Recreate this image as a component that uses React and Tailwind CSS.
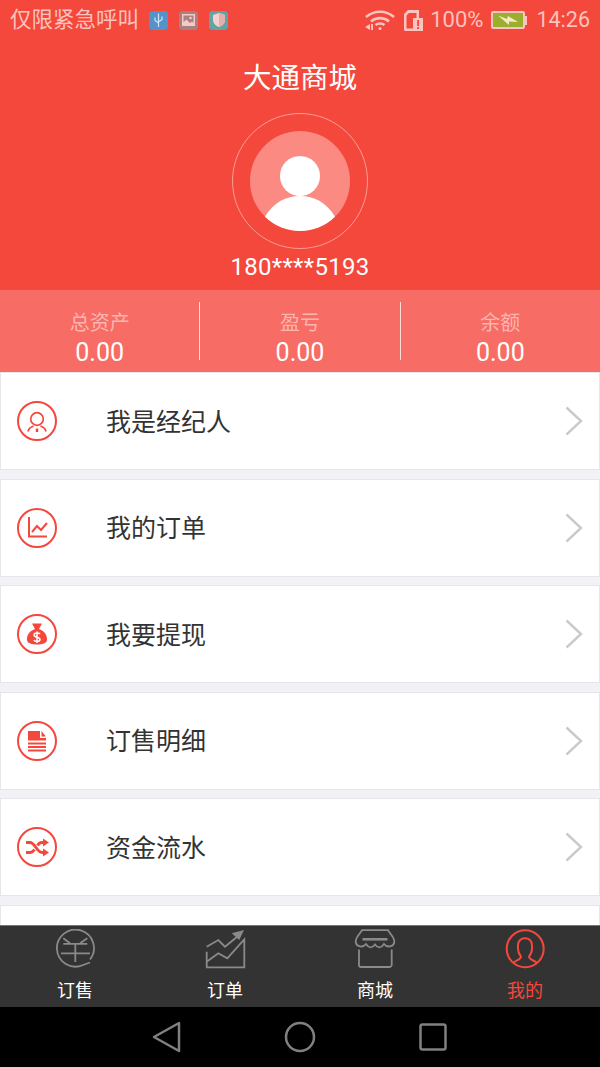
import React from 'react';

const CJK = "font-['Roboto','Noto_Sans_CJK_SC',sans-serif]";

const StatusBar = () => (
  <div className="h-10 flex items-center justify-between pl-[10px] pr-[10px] text-[#fdc3be]">
    <div className="flex items-center">
      <span className="text-[21.5px] leading-none">仅限紧急呼叫</span>
      <div className="flex gap-[11px] ml-[10px]">
        <div className="w-[19px] h-[19px] rounded-[4px] bg-[#5393c9] flex items-center justify-center">
          <svg width="11" height="15" viewBox="0 0 11 15" fill="none" stroke="#cfe3f2" strokeWidth="1.2">
            <path d="M5.5 0.5V14M2 4.5V7.5L5.500 10M9 3.500V6.500L5.500 9" />
          </svg>
        </div>
        <div className="w-[19px] h-[19px] rounded-[4px] bg-[#a97f82] flex items-center justify-center">
          <svg width="13" height="12" viewBox="0 0 13 12" fill="#f6c9c5">
            <path d="M0 0H13V12H0Z M1.500 1.500V8L4.500 5.500L8 9L10 7.500L11.500 9V1.500Z" fillRule="evenodd" />
            <circle cx="8.500" cy="4" r="1.300" />
          </svg>
        </div>
        <div className="w-[19px] h-[19px] rounded-[4px] bg-[#60a5a5] flex items-center justify-center">
          <svg width="12" height="14" viewBox="0 0 12 14">
            <path d="M6 0L12 2V7C12 10.500 9 13 6 14C3 13 0 10.500 0 7V2Z" fill="#f8cfcc" />
            <path d="M6 0L12 2V7C12 10.500 9 13 6 14Z" fill="#e3aeb0" />
          </svg>
        </div>
      </div>
    </div>
    <div className="flex items-center">
      <svg width="32" height="22" viewBox="0 0 32 22" fill="none" stroke="#fdc3be" strokeWidth="2.600">
        <path d="M2 8C10 1 22 1 30 8" />
        <path d="M7 12.500C12 8 20 8 25 12.500" />
        <path d="M11.500 16C14 14 18 14 20.500 16" />
        <circle cx="16" cy="19.500" r="1.500" fill="#fdc3be" stroke="none" />
        <path d="M1 18L6 15V21Z" fill="#fdc3be" stroke="none" />
        <path d="M8 15V21" strokeWidth="2" />
      </svg>
      <svg className="ml-[8px]" width="19" height="21" viewBox="0 0 19 21">
        <path d="M4 0H15V8H12.500V3H5L2.500 5.500V18.500H9V21H1.500A1.500 1.500 0 0 1 0 19.500V4Z" fill="#fdc3be" />
        <path d="M9 8H19V21H9Z" fill="#fdc3be" />
        <path d="M13.200 10H15V16H13.200ZM13.200 17H15V19H13.200Z" fill="#f4483d" />
      </svg>
      <span className="ml-[7px] text-[22px] leading-none">100%</span>
      <div className="ml-[8px] flex items-center">
        <div className="w-[34px] h-[18px] border-2 border-[#fdc3be] rounded-[2px] bg-[#9cae2e] flex items-center justify-center">
          <svg width="22" height="13" viewBox="0 0 22 13">
            <path d="M1 1.500L10 5L11 2L21 8L12 7.500L12 11Z" fill="#f6e9c8" />
          </svg>
        </div>
        <div className="w-[2px] h-[9px] bg-[#fdc3be]" />
      </div>
      <span className="ml-[9px] text-[21.5px] leading-none">14:26</span>
    </div>
  </div>
);

const Header = () => (
  <div className="bg-[#f4483d] h-[290px] flex flex-col">
    <StatusBar />
    <div className="text-center text-white text-[28.5px] leading-none mt-[25px]">大通商城</div>
    <div className="mx-auto mt-[19.5px] w-[136px] h-[136px] rounded-full border border-[#fa9c95] flex items-center justify-center">
      <svg width="100" height="100" viewBox="0 0 100 100">
        <circle cx="50" cy="50" r="50" fill="#fb8a83" />
        <circle cx="50" cy="45" r="20" fill="#fff" />
        <path d="M15 85.700C24 71 36 65 50 65C64 65 76 71 85 85.700A50 50 0 0 1 15 85.700Z" fill="#fff" />
      </svg>
    </div>
    <div className="text-center text-white text-[24px] leading-none mt-[6px] tracking-[0.3px]">180****5193</div>
  </div>
);

const Stat = ({ label, divider }) => (
  <div className={`flex-1 h-[58px] flex flex-col items-center justify-between ${divider ? 'border-r border-[#ffe0dd]' : ''}`}>
    <span className="text-[20px] leading-none mt-[11px] text-[#fdb5af]">{label}</span>
    <span className="text-[25px] leading-none text-white -mb-[5px]">0.00</span>
  </div>
);

const Stats = () => (
  <div className="h-[82px] bg-[#f76c64] flex items-start pt-3">
    <Stat label="总资产" divider />
    <Stat label="盈亏" divider />
    <Stat label="余额" />
  </div>
);

const BrokerIcon = () => (
  <>
    <circle cx="14" cy="12" r="6.300" strokeWidth="1.700" />
    <path d="M5 24.500C5.500 21.500 8 20 10.500 19M23 24.500C22.500 21.500 20 20 17.500 19" strokeWidth="1.700" />
    <path d="M14 21.500V25" strokeWidth="2.500" />
  </>
);

const OrderIcon = () => (
  <path d="M6 3V22.500H24M9 18L14 12L18 16L24 9" />
);

const MoneyIcon = () => (
  <>
    <path d="M9 3.500H19L16 9C22 11 24.500 16 24 20C23.500 23.500 19 24.500 14 24.500C9 24.500 4.500 23.500 4 20C3.500 16 6 11 12 9Z" fill="#f4483d" stroke="none" />
    <path d="M17 14C16 12.500 11 12.500 11 15C11 18 17 16.500 17 19.500C17 22 12 22 11 20M14 11.500V23" stroke="#fff" strokeWidth="1.500" />
  </>
);

const DetailIcon = () => (
  <>
    <path d="M5 4H17V11H23V13.500H5Z" fill="#f4483d" stroke="none" />
    <path d="M18.500 4L23 9.500H18.500Z" fill="#f4483d" stroke="none" />
    <path d="M5 16.500H23M5 20H23M5 23.500H23" strokeWidth="2.200" />
  </>
);

const ShuffleIcon = () => (
  <>
    <path d="M3 9.500H7C12 9.500 14 19.500 19 19.500H21M3 19.500H7C9 19.500 10.500 18 11.500 16.500M14.500 12.500C15.500 10.500 17 9.500 19 9.500H21" strokeWidth="3" />
    <path d="M20 5.500L26 9.500L20 13.500ZM20 15.500L26 19.500L20 23.500Z" fill="#f4483d" stroke="none" />
  </>
);

const Row = ({ title, icon }) => (
  <div className="h-[98px] shrink-0 bg-white border border-[#e6e6ea] flex items-center pl-4 pr-[16px]">
    <div className="w-10 h-10 rounded-full border-2 border-[#f4483d] flex items-center justify-center">
      <svg width="28" height="28" viewBox="0 0 28 28" fill="none" stroke="#f4483d" strokeWidth="2">
        {icon}
      </svg>
    </div>
    <span className="ml-[49px] mt-[2px] flex-1 text-[25px] leading-none text-[#333]">{title}</span>
    <svg width="18" height="30" viewBox="0 0 18 30" fill="none" stroke="#cacaca" strokeWidth="2.400">
      <path d="M1.500 1.500L16 15L1.500 28.500" />
    </svg>
  </div>
);

const Tab = ({ label, active, children }) => (
  <div className="flex-1 flex flex-col items-center pt-[3px]">
    <svg width="42" height="40" viewBox="0 0 42 40" fill="none" stroke={active ? '#f4483d' : '#8a8a8a'} strokeWidth="1.800">
      {children}
    </svg>
    <span className={`text-[18px] leading-none mt-[13px] ${active ? 'text-[#f4483d]' : 'text-white'}`}>{label}</span>
  </div>
);

const BottomTabs = () => (
  <div className="h-[82px] shrink-0 bg-[#333] border-t border-[#777] flex">
    <Tab label="订售">
      <path d="M36 30.500A18.500 18.500 0 1 0 29 36L36 33.500" />
      <path d="M9.300 9.300L16 14.300M33.300 9.300L26 14.300M9.300 14.900H33.300M7 24.300H36M21.300 14.900V33" />
    </Tab>
    <Tab label="订单">
      <path d="M2.700 22.700V38.300H40.300V10.300L23.300 29.300L14.300 24.300L2.700 32.700" />
      <path d="M2.700 17.700L14.300 11L21 17.700L35.300 6" />
      <path d="M27.700 4.300L40 1L35.300 11Z" fill="#8a8a8a" stroke="none" />
    </Tab>
    <Tab label="商城">
      <path d="M8 1.200H34C36 5 41 9 40.300 13C39.500 18 33 19 30 15C27 19.500 24 19.500 21 15.500C18 19.500 15 19.500 12 15C9 19 2.500 18 1.700 13C1 9 6 5 8 1.200Z" />
      <path d="M8.500 10.300H33.500" strokeWidth="2.600" />
      <path d="M5 20.500V36C5 37 6 38 7 38H35.500C36.500 38 37.700 37 37.700 36V20.500" />
    </Tab>
    <Tab label="我的" active>
      <circle cx="21.200" cy="19.800" r="18.500" strokeWidth="2" />
      <path d="M9 34C12 31 17 31 17 27.500C15 25 13.500 21 14 16C14.500 11.500 17.500 9.300 21 9.300C24.500 9.300 27.500 11.500 28 16C28.500 21 27 25 25 27.500C25 31 30 31 33.500 34" strokeWidth="2" />
    </Tab>
  </div>
);

const NavBar = () => (
  <div className="h-[60px] shrink-0 bg-black flex items-center justify-center gap-[102.5px] pr-[2px]">
    <svg width="30" height="32" viewBox="0 0 30 32" fill="none" stroke="#808080" strokeWidth="2.500" strokeLinejoin="round">
      <path d="M27 2V30L2 16Z" />
    </svg>
    <svg width="32" height="32" viewBox="0 0 32 32" fill="none" stroke="#808080" strokeWidth="2.500">
      <circle cx="16" cy="16" r="14" />
    </svg>
    <svg width="28" height="28" viewBox="0 0 28 28" fill="none" stroke="#808080" strokeWidth="2.500">
      <rect x="1.500" y="1.500" width="25" height="25" rx="2" />
    </svg>
  </div>
);

const rows = [
  { title: '我是经纪人', icon: <BrokerIcon /> },
  { title: '我的订单', icon: <OrderIcon /> },
  { title: '我要提现', icon: <MoneyIcon /> },
  { title: '订售明细', icon: <DetailIcon /> },
  { title: '资金流水', icon: <ShuffleIcon /> },
  { title: '', icon: null },
];

export default function App() {
  return (
    <div className={`h-[1067px] w-[600px] overflow-hidden flex flex-col bg-[#f2f2f6] ${CJK}`}>
      <Header />
      <Stats />
      <div className="flex-1 min-h-0 overflow-hidden flex flex-col gap-[8.5px]">
        {rows.map((r, i) => (
          <Row key={i} title={r.title} icon={r.icon} />
        ))}
      </div>
      <BottomTabs />
      <NavBar />
    </div>
  );
}
